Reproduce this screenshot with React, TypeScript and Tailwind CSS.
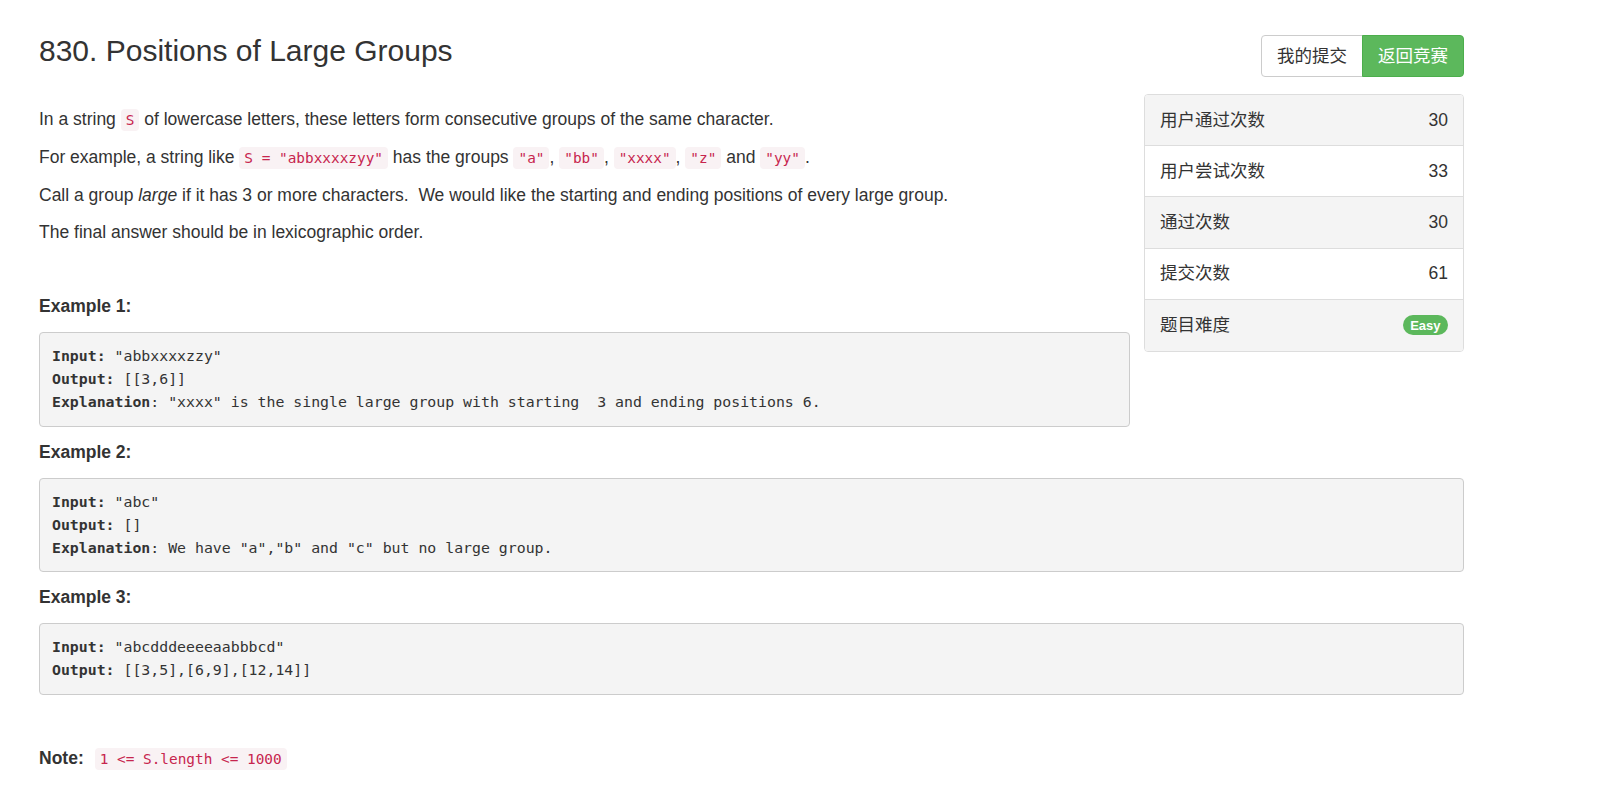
import React from 'react';

const codeCls =
  "rounded-[4px] bg-[#f9f2f4] px-[5px] py-[3px] text-[#c7254e] text-[14.4px] font-['DejaVu_Sans_Mono',monospace]";

function C({ children }: { children: React.ReactNode }) {
  return <code className={codeCls}>{children}</code>;
}

const stats = [
  { label: '用户通过次数', value: '30' },
  { label: '用户尝试次数', value: '33' },
  { label: '通过次数', value: '30' },
  { label: '提交次数', value: '61' },
];

function Pre({ lines }: { lines: [string, string][] }) {
  return (
    <pre className="mb-[13px] rounded-[4px] border border-[#cccccc] bg-[#f4f4f4] pl-[12px] pr-[12px] pt-[12px] pb-[11px] text-[14.85px] leading-[23.2px] text-[#333333] font-['DejaVu_Sans_Mono',monospace] whitespace-pre overflow-auto">
      {lines.map(([k, v], i) => (
        <React.Fragment key={i}>
          <b>{k}</b>
          {v}
          {i < lines.length - 1 ? '\n' : ''}
        </React.Fragment>
      ))}
    </pre>
  );
}

function Heading({ children }: { children: React.ReactNode }) {
  return <p className="mb-[13px] font-bold leading-[25px]">{children}</p>;
}

export default function App() {
  return (
    <div className="min-h-screen bg-white text-[#333333] text-[17.5px] font-['Liberation_Sans','Noto_Sans_CJK_SC',sans-serif]">
      <div className="ml-[39px] w-[1425px] pt-[34px]">
        {/* Header */}
        <div className="flex items-start justify-between">
          <h2 className="text-[30px] leading-[33px] font-normal">830. Positions of Large Groups</h2>
          <div className="mt-[1px] flex">
            <button className="h-[42px] rounded-l-[4px] border border-[#cccccc] bg-white px-[15px] leading-[25px] text-[#333333]">
              我的提交
            </button>
            <button className="-ml-px h-[42px] rounded-r-[4px] border border-[#4cae4c] bg-[#5cb85c] px-[15px] leading-[25px] text-white">
              返回竞赛
            </button>
          </div>
        </div>

        {/* Description + stats */}
        <div className="mt-[17px] flex items-start gap-[14px]">
          <div className="min-w-0 flex-1 pt-[13px]">
            <p className="mb-[12px] leading-[25px]">
              In a string <C>S</C> of lowercase letters, these letters form consecutive groups of the same character.
            </p>
            <p className="mb-[12px] leading-[25px]">
              For example, a string like <C>S = "abbxxxxzyy"</C> has the groups <C>"a"</C>, <C>"bb"</C>,{' '}
              <C>"xxxx"</C>, <C>"z"</C> and <C>"yy"</C>.
            </p>
            <p className="mb-[12px] leading-[25px]">
              Call a group <i>large</i> if it has 3 or more characters.{'\u00a0'} We would like the starting and ending
              positions of every large group.
            </p>
            <p className="mb-[12px] leading-[25px]">The final answer should be in lexicographic order.</p>

            <div className="pt-[37px]">
              <Heading>Example 1:</Heading>
              <Pre
                lines={[
                  ['Input: ', '"abbxxxxzzy"'],
                  ['Output: ', '[[3,6]]'],
                  ['Explanation', ': "xxxx" is the single large group with starting  3 and ending positions 6.'],
                ]}
              />
            </div>
          </div>

          <div className="w-[320px] overflow-hidden rounded-[4px] border border-[#dddddd] divide-y divide-[#dddddd]">
            {stats.map((s, i) => (
              <div
                key={s.label}
                className={
                  'flex h-[51.2px] items-center justify-between px-[15px] leading-[25px] ' +
                  (i % 2 === 0 ? 'bg-[#f4f4f4]' : 'bg-white')
                }
              >
                <span>{s.label}</span>
                <span>{s.value}</span>
              </div>
            ))}
            <div className="flex h-[51.2px] items-center justify-between bg-[#f4f4f4] px-[15px] leading-[25px]">
              <span>题目难度</span>
              <span className="flex h-[20px] items-center rounded-full bg-[#5cb85c] px-[7.5px] text-[13px] font-bold text-white">
                Easy
              </span>
            </div>
          </div>
        </div>

        {/* Remaining examples */}
        <Heading>Example 2:</Heading>
        <Pre
          lines={[
            ['Input: ', '"abc"'],
            ['Output: ', '[]'],
            ['Explanation', ': We have "a","b" and "c" but no large group.'],
          ]}
        />
        <Heading>Example 3:</Heading>
        <Pre
          lines={[
            ['Input: ', '"abcdddeeeeaabbbcd"'],
            ['Output: ', '[[3,5],[6,9],[12,14]]'],
          ]}
        />

        <p className="mt-[51px] leading-[25px]">
          <b>Note:</b>
          <span className="ml-[11px]">
            <C>1 &lt;= S.length &lt;= 1000</C>
          </span>
        </p>
      </div>
    </div>
  );
}
